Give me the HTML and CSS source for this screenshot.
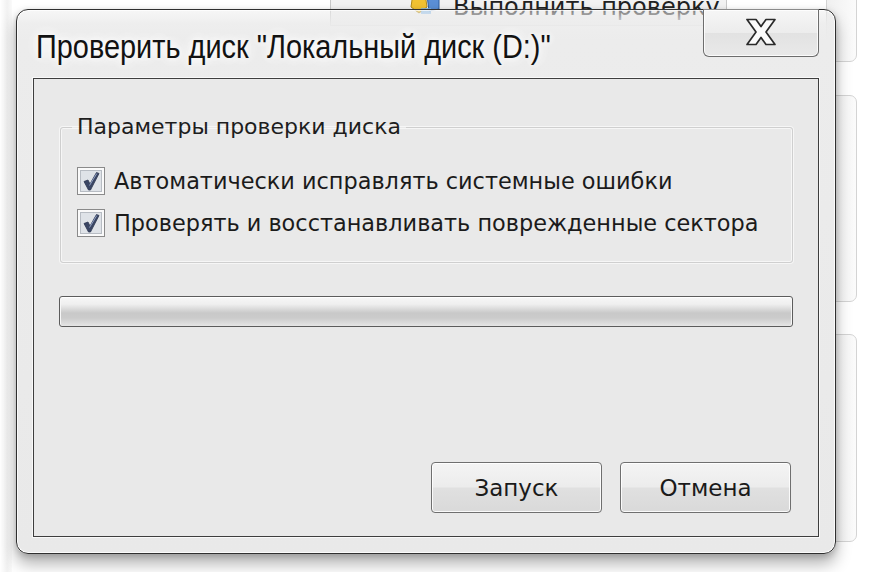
FILE: index.html
```html
<!DOCTYPE html>
<html lang="ru">
<head>
<meta charset="utf-8">
<title>Проверить диск</title>
<link rel="stylesheet" href="styles.css">
</head>
<body>
<div class="desk">
  <div class="bg-left"></div>
  <div class="bg-top">
    <span class="bg-icon">
      <svg width="34" height="18" viewBox="0 0 34 18">
        <path d="M4 -6 L16 -6 L18 8 L10 14 L2 8 Z" fill="#f1c232" stroke="#b08a1a" stroke-width="1"/>
        <path d="M18 -4 L30 -4 L30 10 L20 12 Z" fill="#5b8fd6" stroke="#2f5d9e" stroke-width="1"/>
        <rect x="12" y="9" width="10" height="6" fill="#7fb7e8" opacity=".8"/>
      </svg>
    </span>
    <span class="bg-text">Выполнить проверку</span>
  </div>
  <div class="bg-panel p1"></div>
  <div class="bg-panel p2"></div>
  <div class="bg-panel p3"></div>

  <div class="dialog">
    <div class="titlebar">
      <div class="title">Проверить диск "Локальный диск (D:)"</div>
      <button class="close" aria-label="Закрыть">
        <svg width="34" height="30" viewBox="0 0 34 30">
          <path d="M3 2.5 L12 2.5 L17 9.5 L22 2.5 L31 2.5 L22 15 L31 27.5 L22 27.5 L17 20.5 L12 27.5 L3 27.5 L12 15 Z" fill="#fbfbfb" stroke="#2a2a2a" stroke-width="1.7" stroke-linejoin="round"/>
        </svg>
      </button>
    </div>
    <div class="client">
      <fieldset class="group">
        <legend>Параметры проверки диска</legend>
        <label class="check">
          <span class="box">
            <svg width="28" height="28" viewBox="0 0 28 28">
              <rect x="0.5" y="0.5" width="27" height="27" fill="#fafafa" stroke="#8a8a8a"/>
              <rect x="3.5" y="3.5" width="21" height="21" fill="#dfe3e8" stroke="#b7bcc3"/>
              <path d="M7 14.5 L11 13 L13 17 L19.5 5.5 L22 6.5 L13.5 23 L11.5 23 Z" fill="#3a4664" stroke="#2c3650" stroke-width="0.8" stroke-linejoin="round"/>
              <path d="M12.5 18.5 L19.8 6.5" stroke="#8fa0c4" stroke-width="1"/>
            </svg>
          </span>
          <span>Автоматически исправлять системные ошибки</span>
        </label>
        <label class="check">
          <span class="box">
            <svg width="28" height="28" viewBox="0 0 28 28">
              <rect x="0.5" y="0.5" width="27" height="27" fill="#fafafa" stroke="#8a8a8a"/>
              <rect x="3.5" y="3.5" width="21" height="21" fill="#dfe3e8" stroke="#b7bcc3"/>
              <path d="M7 14.5 L11 13 L13 17 L19.5 5.5 L22 6.5 L13.5 23 L11.5 23 Z" fill="#3a4664" stroke="#2c3650" stroke-width="0.8" stroke-linejoin="round"/>
              <path d="M12.5 18.5 L19.8 6.5" stroke="#8fa0c4" stroke-width="1"/>
            </svg>
          </span>
          <span>Проверять и восстанавливать поврежденные сектора</span>
        </label>
      </fieldset>
      <div class="progress"></div>
      <div class="buttons">
        <button class="btn">Запуск</button>
        <button class="btn">Отмена</button>
      </div>
    </div>
  </div>
</div>
</body>
</html>
```

FILE: styles.css
```css
html, body {
  margin: 0;
  padding: 0;
  background: #ffffff;
}

.desk {
  position: relative;
  width: 874px;
  height: 572px;
  overflow: hidden;
  background: #ffffff;
  font-family: "DejaVu Sans", "Liberation Sans", sans-serif;
  color: #1b1b1b;
}

.bg-left {
  position: absolute;
  left: 0;
  top: 0;
  width: 12px;
  height: 572px;
  background: linear-gradient(to right, #ffffff, #f1f1f1 60%, #fafafa);
}

.bg-top {
  position: absolute;
  left: 330px;
  top: -14px;
  width: 397px;
  height: 40px;
  box-sizing: border-box;
  border: 1px solid #c9c9c9;
  background: #f2f2f2;
  display: flex;
  align-items: flex-end;
  padding-left: 78px;
  gap: 10px;
}

.bg-icon {
  display: block;
  height: 18px;
  margin-bottom: 8px;
}

.bg-text {
  font-size: 24px;
  line-height: 28px;
  color: #222;
  margin-bottom: 4px;
  white-space: nowrap;
}

.bg-panel {
  position: absolute;
  left: 826px;
  width: 31px;
  box-sizing: border-box;
  border: 1px solid #d4d4d4;
  border-radius: 0 7px 7px 0;
  background: linear-gradient(to right, #f0f0f0, #fbfbfb);
}
.p1 { top: -10px; height: 72px; }
.p2 { top: 95px; height: 207px; }
.p3 { top: 334px; height: 208px; }

.dialog {
  position: absolute;
  left: 16px;
  top: 9px;
  width: 820px;
  height: 545px;
  box-sizing: border-box;
  border: 1px solid #2f2f2f;
  border-radius: 12px;
  background: linear-gradient(to bottom, rgba(236,236,236,0.45) 0px, rgba(236,236,236,0.9) 14px, #ececec 30px, #e9e9e9 100%);
  box-shadow: 0 10px 16px rgba(0,0,0,0.3), 0 2px 6px rgba(0,0,0,0.18), inset 0 0 0 1px rgba(255,255,255,0.75);
  display: flex;
  flex-direction: column;
  padding: 0 16px 16px 16px;
}

.titlebar {
  height: 68px;
  flex: none;
  display: flex;
  align-items: flex-start;
}

.title {
  margin: 17px 0 0 3px;
  font-family: "Liberation Sans", Arial, sans-serif;
  font-size: 34px;
  line-height: 38px;
  color: #121212;
  white-space: nowrap;
  transform: scaleX(0.85);
  transform-origin: left center;
  text-shadow: 0 0 8px #ffffff, 0 0 14px #ffffff, 0 0 18px #ffffff;
}

.close {
  margin: -1px 0 0 auto;
  width: 116px;
  height: 48px;
  box-sizing: border-box;
  border: 1px solid #6d6d6d;
  border-top-color: #8a8a8a;
  border-radius: 0 0 6px 6px;
  background: linear-gradient(to bottom, #f6f6f6 0%, #ececec 50%, #e2e2e2 51%, #e9e9e9 100%);
  box-shadow: inset 0 0 0 1px rgba(255,255,255,0.8);
  display: flex;
  align-items: center;
  justify-content: center;
  padding: 0;
}
.close svg { display: block; margin-top: -2px; }

.client {
  flex: 1;
  box-sizing: border-box;
  border: 1px solid #3e3e3e;
  background: #e9e9e9;
  box-shadow: 0 0 0 1px rgba(255,255,255,0.7);
  display: flex;
  flex-direction: column;
  padding: 35px 25px 23px 25px;
}

.group {
  margin: 0 0 0 1px;
  border: 1px solid #cfcfcf;
  border-radius: 3px;
  box-shadow: inset 0 0 0 1px #f6f6f6, 0 0 0 1px #f6f6f6;
  padding: 27px 16px 25px 16px;
  min-width: 0;
  display: flex;
  flex-direction: column;
  gap: 14px;
}

.group legend {
  font-size: 22px;
  line-height: 26px;
  padding: 0 5px;
  margin-left: -5px;
  color: #1e1e1e;
}

.check {
  display: flex;
  align-items: center;
  gap: 9px;
  height: 28px;
  font-size: 22.4px;
  line-height: 28px;
  color: #1b1b1b;
  white-space: nowrap;
}

.box {
  display: block;
  width: 28px;
  height: 28px;
  flex: none;
}
.box svg { display: block; }

.progress {
  margin-top: 33px;
  height: 31px;
  box-sizing: border-box;
  border: 1px solid #5c5c5c;
  border-radius: 3px;
  background: linear-gradient(to bottom, #f7f7f7 0%, #efefef 25%, #dcdcdc 40%, #c9c9c9 55%, #cbcbcb 72%, #dadada 88%, #e6e6e6 100%);
  box-shadow: inset 1px 0 0 #f7f7f7, inset -1px 0 0 #f7f7f7, inset 0 1px 0 #ffffff;
}

.buttons {
  margin-top: auto;
  display: flex;
  justify-content: flex-end;
  gap: 18px;
  padding-right: 2px;
}

.btn {
  width: 171px;
  height: 51px;
  box-sizing: border-box;
  border: 1px solid #6f6f6f;
  border-radius: 4px;
  background: linear-gradient(to bottom, #f4f4f4 0%, #ececec 48%, #e0e0e0 52%, #d9d9d9 100%);
  box-shadow: inset 0 0 0 1px rgba(255,255,255,0.85);
  font-family: "DejaVu Sans", "Liberation Sans", sans-serif;
  font-size: 23px;
  color: #1a1a1a;
  padding: 0;
}
```
